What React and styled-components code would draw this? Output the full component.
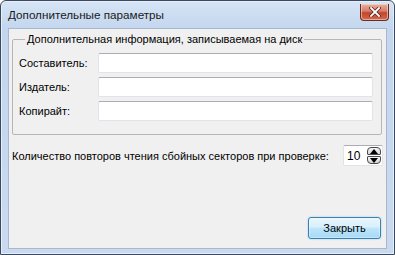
import styled, { createGlobalStyle } from 'styled-components';

const GlobalStyle = createGlobalStyle`
  html, body {
    margin: 0;
    padding: 0;
    background: #ffffff;
  }
  body {
    font-family: "Liberation Sans", Arial, sans-serif;
    font-size: 11px;
    color: #000;
  }
`;

const Window = styled.div`
  width: 395px;
  height: 255px;
  box-sizing: border-box;
  display: flex;
  flex-direction: column;
  border: 1px solid #3b4a5e;
  border-radius: 6px 6px 0 0;
  background: linear-gradient(to bottom, #d6e4f5 0px, #c3d6ee 28px, #c9daf0 100%);
  padding: 0 7px 5px 7px;
  box-shadow: inset 0 0 0 1px #e6eef9;
`;

const TitleBar = styled.div`
  height: 27px;
  display: flex;
  align-items: flex-start;
  justify-content: space-between;
`;

const Title = styled.div`
  padding: 7px 0 0 0;
  font-size: 11.7px;
  color: #1a1a1a;
`;

const CloseButton = styled.div`
  width: 29px;
  height: 17px;
  margin: 3px -2px 0 0;
  box-sizing: border-box;
  border: 1px solid #6c2b22;
  border-top: none;
  border-radius: 0 0 4px 4px;
  background: linear-gradient(to bottom, #eab0a2 0%, #d87b67 45%, #c4452c 55%, #d36a4e 100%);
  box-shadow: inset 0 0 0 1px rgba(255, 225, 215, 0.55);
  display: flex;
  align-items: center;
  justify-content: center;
`;

const Client = styled.div`
  flex: 1;
  display: flex;
  flex-direction: column;
  background: #f0f0f0;
  border: 1px solid #a7b8cc;
  padding: 4px 2px 9px 3px;
  box-sizing: border-box;
`;

const Group = styled.fieldset`
  margin: 0;
  width: 370px;
  box-sizing: border-box;
  border: 1px solid #b6b6b6;
  border-radius: 2px;
  padding: 7px 8px 13px 6px;
  display: flex;
  flex-direction: column;
  gap: 4px;
`;

const Legend = styled.legend`
  padding: 0 2px;
  margin-left: 6px;
  line-height: 13px;
  font-size: 11px;
`;

const FieldRow = styled.div`
  display: flex;
  align-items: center;
`;

const Label = styled.span`
  width: 79px;
  flex: none;
`;

const TextBox = styled.div`
  width: 275px;
  height: 20px;
  box-sizing: border-box;
  background: #fff;
  border: 1px solid #e2e3ea;
  border-top-color: #abadb3;
  border-radius: 2px;
`;

const RetryRow = styled.div`
  display: flex;
  align-items: center;
  justify-content: space-between;
  margin: 10px 0 0 0;
  width: 371px;
  white-space: nowrap;
`;

const SpinBox = styled.div`
  width: 40px;
  height: 21px;
  box-sizing: border-box;
  background: #fff;
  border: 1px solid #e2e3ea;
  border-top-color: #abadb3;
  border-radius: 2px;
  display: flex;
  align-items: center;
  justify-content: space-between;
  padding: 0 1px 0 3px;
  font-size: 12px;
`;

const SpinArrows = styled.div`
  display: flex;
  flex-direction: column;
  gap: 1px;
`;

const SpinArrow = styled.div`
  width: 14px;
  height: 8px;
  box-sizing: border-box;
  border: 1px solid #4a4a4a;
  border-radius: ${(p) => (p.up ? '4px 4px 1px 1px' : '1px 1px 4px 4px')};
  background: linear-gradient(to bottom, #f6f6f6, #d4d4d4);
  display: flex;
  align-items: center;
  justify-content: center;
`;

const Footer = styled.div`
  margin-top: auto;
  display: flex;
  justify-content: flex-end;
  padding-right: 3px;
`;

const Button = styled.div`
  width: 73px;
  height: 22px;
  box-sizing: border-box;
  border: 1px solid #3c7fb1;
  border-radius: 3px;
  background: linear-gradient(to bottom, #eaf6fd 0%, #d9f0fc 45%, #bee6fd 50%, #a7d9f5 100%);
  box-shadow: inset 0 0 0 1px #ffffff55, 0 0 2px #8ccdf0;
  display: flex;
  align-items: center;
  justify-content: center;
`;

const Arrow = ({ up }) => (
  <svg width="8" height="5" viewBox="0 0 8 5">
    {up ? <path d="M0 5 L4 0 L8 5 Z" fill="#000" /> : <path d="M0 0 L4 5 L8 0 Z" fill="#000" />}
  </svg>
);

const fields = ['Составитель:', 'Издатель:', 'Копирайт:'];

export default function App() {
  return (
    <>
      <GlobalStyle />
      <Window>
        <TitleBar>
          <Title>Дополнительные параметры</Title>
          <CloseButton>
            <svg width="12" height="10" viewBox="0 0 12 10">
              <path d="M2 1 L10 9 M10 1 L2 9" stroke="#5a2a22" strokeWidth="3.4" strokeLinecap="square" />
              <path d="M2 1 L10 9 M10 1 L2 9" stroke="#ffffff" strokeWidth="1.8" strokeLinecap="square" />
            </svg>
          </CloseButton>
        </TitleBar>
        <Client>
          <Group>
            <Legend>Дополнительная информация, записываемая на диск</Legend>
            {fields.map((f) => (
              <FieldRow key={f}>
                <Label>{f}</Label>
                <TextBox />
              </FieldRow>
            ))}
          </Group>
          <RetryRow>
            <span>Количество повторов чтения сбойных секторов при проверке:</span>
            <SpinBox>
              <span>10</span>
              <SpinArrows>
                <SpinArrow up>
                  <Arrow up />
                </SpinArrow>
                <SpinArrow>
                  <Arrow />
                </SpinArrow>
              </SpinArrows>
            </SpinBox>
          </RetryRow>
          <Footer>
            <Button>Закрыть</Button>
          </Footer>
        </Client>
      </Window>
    </>
  );
}
